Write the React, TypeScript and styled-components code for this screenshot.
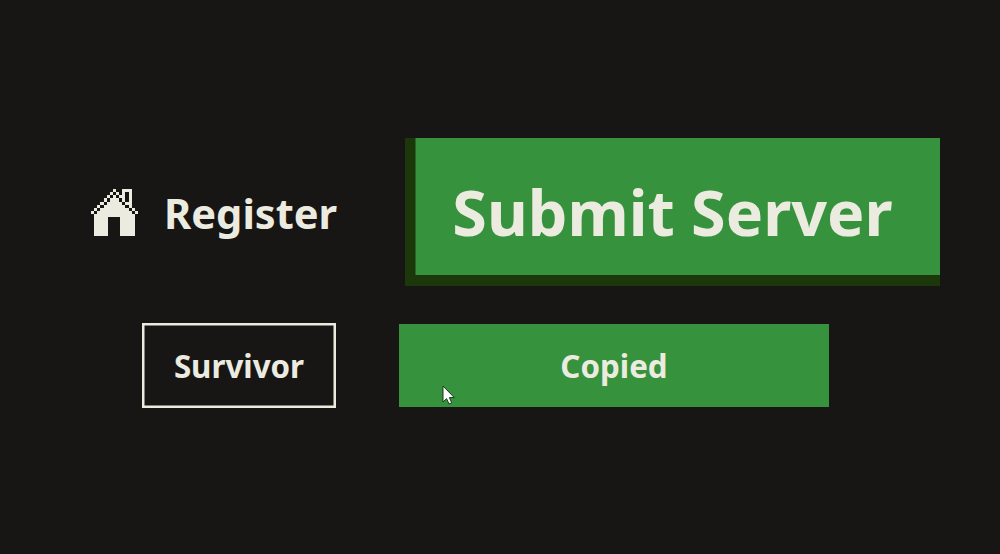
import * as React from 'react'
import styled, {createGlobalStyle} from 'styled-components'

const colors = {
  background: '#171614',
  text: '#ebebe0',
  green: '#36923c',
  shadow: '#1c370a',
}

const GlobalStyle = createGlobalStyle`
  * {
    box-sizing: border-box;
  }

  body {
    margin: 0;
    background: ${colors.background};
    color: ${colors.text};
    font-family: 'Noto Sans', sans-serif;
    font-weight: 700;
  }
`

const StyledPage = styled.main`
  position: relative;
  height: 554px;
  overflow: hidden;
  padding-top: 138px;
`

const StyledTopRow = styled.section`
  display: flex;
  align-items: center;
  padding-left: 91px;
  height: 148px;
`

const StyledBottomRow = styled.section`
  display: flex;
  gap: 63px;
  margin-top: 37px;
  padding-left: 142px;
`

const StyledLink = styled.a`
  display: flex;
  align-items: center;
  width: 314px;
  gap: 26px;
  font-size: 41.6px;
  line-height: 58px;
  white-space: nowrap;

  svg {
    flex: none;
  }
`

const StyledLinkLabel = styled.span`
  padding-top: 2px;
`

const StyledButton = styled.button`
  flex: none;
  padding: 0;
  border: 0;
  color: ${colors.text};
  background: ${colors.green};
  font-family: inherit;
  font-weight: inherit;
  white-space: nowrap;
`

const StyledSubmitButton = styled(StyledButton)`
  width: 535px;
  height: 148px;
  font-size: 62.8px;
  line-height: 86px;
  box-shadow: inset 10.5px -11px 0 ${colors.shadow};
`

const StyledSmallButton = styled(StyledButton)<{$width: number}>`
  width: ${({$width}) => $width}px;
  height: 83px;
  margin-top: 1px;
  font-size: 31.3px;
  line-height: 44px;
`

const StyledOutlinedButton = styled(StyledSmallButton)`
  height: 84.5px;
  margin-top: 0;
  padding-top: 1.5px;
  background: transparent;
  box-shadow: inset 0 0 0 2.5px ${colors.text};
`

const StyledCursor = styled.svg`
  position: absolute;
  left: 442px;
  top: 385px;
`

const HomeIcon = () => (
  <svg
    width="47"
    height="47"
    viewBox="0 0 15 15"
    fill={colors.text}
    shapeRendering="crispEdges"
  >
    {/* roof outline, one block per step */}
    {[0, 1, 2, 3, 4, 5, 6, 7].map(step => (
      <React.Fragment key={step}>
        <rect x={7 - step} y={step} width="1" height="1" />
        <rect x={7 + step} y={step} width="1" height="1" />
      </React.Fragment>
    ))}
    {[2, 3, 4, 5, 6, 7].map(row => (
      <rect key={row} x={9 - row} y={row} width={row * 2 - 3} height="1" />
    ))}
    <path d="M1 8H14V15H9.4V9H5.5V15H1Z" />
    <path d="M10 0H13V6H12V1H11V3H10Z" />
  </svg>
)

const App = () => (
  <>
    <GlobalStyle />
    <StyledPage>
      <StyledTopRow>
        <StyledLink>
          <HomeIcon />
          <StyledLinkLabel>Register</StyledLinkLabel>
        </StyledLink>
        <StyledSubmitButton type="button">Submit Server</StyledSubmitButton>
      </StyledTopRow>
      <StyledBottomRow>
        <StyledOutlinedButton type="button" $width={194}>
          Survivor
        </StyledOutlinedButton>
        <StyledSmallButton type="button" $width={430}>
          Copied
        </StyledSmallButton>
      </StyledBottomRow>
      <StyledCursor width="13" height="20" viewBox="0 0 13 20">
        <path
          d="M1 1V17L4.6 13.7L7 19L9.7 17.8L7.4 12.6H12.3Z"
          fill="#fff"
          stroke="#173b1a"
          strokeWidth="1"
        />
      </StyledCursor>
    </StyledPage>
  </>
)

export default App
